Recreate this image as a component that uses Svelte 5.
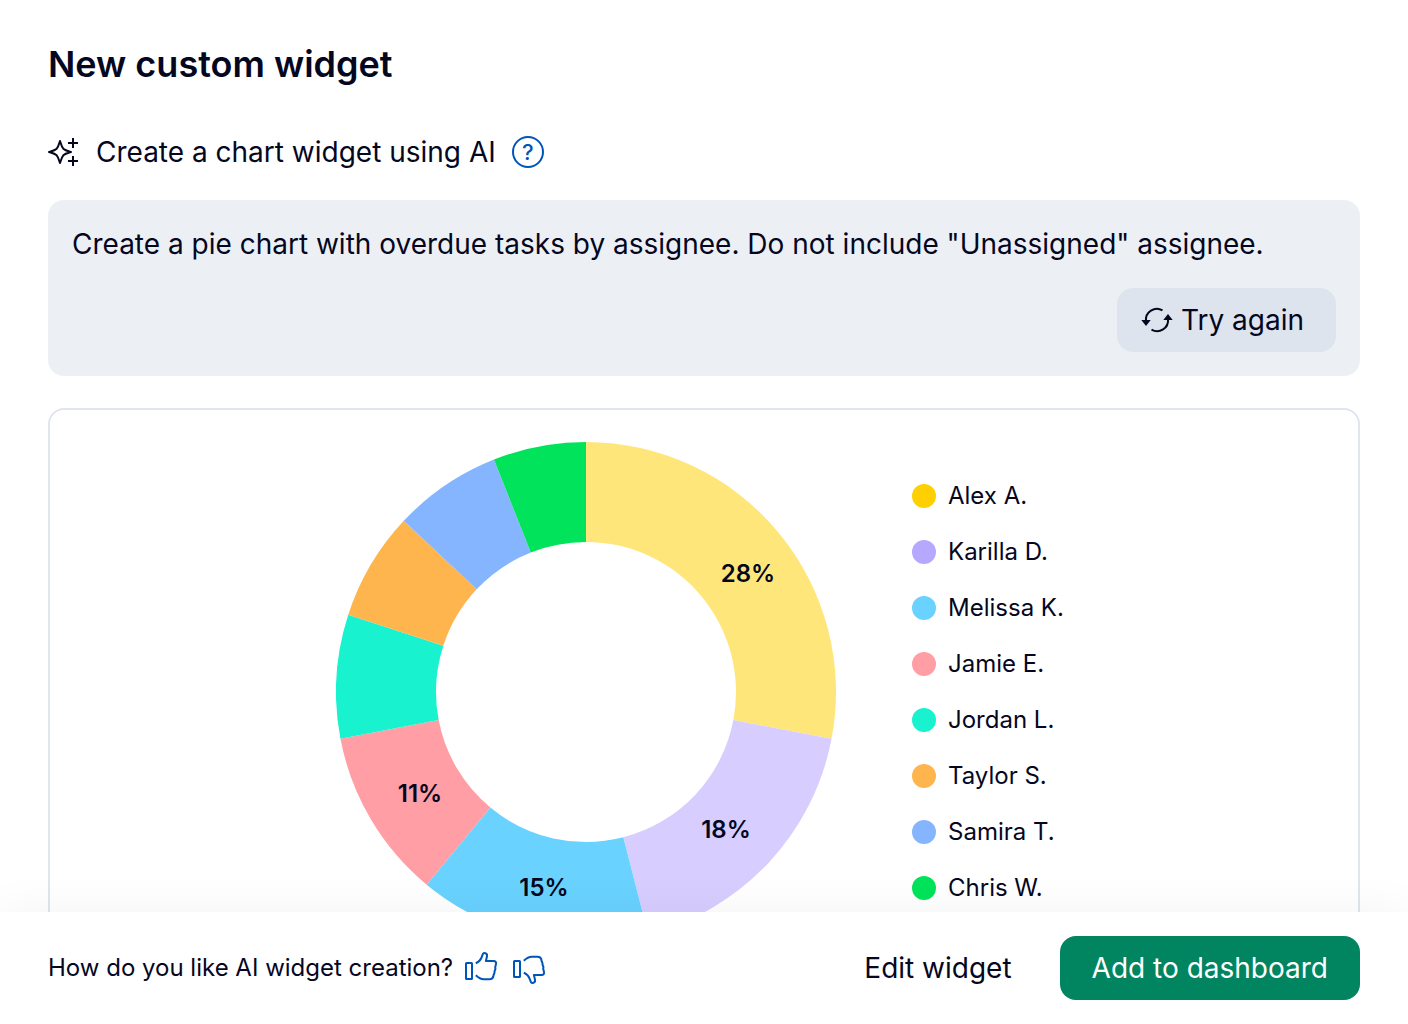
<script>
  const slices = [
    { name: 'Alex A.', value: 28, fill: '#ffe67a', dot: '#ffd000', x: 412, y: 131 },
    { name: 'Karilla D.', value: 18, fill: '#d7ceff', dot: '#b6a7ff', x: 390, y: 387 },
    { name: 'Melissa K.', value: 15, fill: '#69d2ff', dot: '#69d2ff', x: 208, y: 445 },
    { name: 'Jamie E.', value: 11, fill: '#ff9ea5', dot: '#ff9ea5', x: 84, y: 351 },
    { name: 'Jordan L.', value: 8, fill: '#19f2cf', dot: '#19f2cf' },
    { name: 'Taylor S.', value: 7, fill: '#ffb54d', dot: '#ffb54d' },
    { name: 'Samira T.', value: 7, fill: '#86b5ff', dot: '#86b5ff' },
    { name: 'Chris W.', value: 6, fill: '#00e35b', dot: '#00e35b' }
  ];

  let prompt = $state(
    'Create a pie chart with overdue tasks by assignee. Do not include "Unassigned" assignee.'
  );

  function point(percent, radius) {
    const angle = (percent / 100) * Math.PI * 2;
    return `${(250 + radius * Math.sin(angle)).toFixed(2)} ${(250 - radius * Math.cos(angle)).toFixed(2)}`;
  }

  function ring(start, end) {
    return `M${point(start, 250)}A250 250 0 0 1 ${point(end, 250)}L${point(end, 150)}A150 150 0 0 0 ${point(start, 150)}Z`;
  }

  let total = 0;
  const arcs = slices.map((s) => {
    const start = total;
    total += s.value;
    return { ...s, d: ring(start, total) };
  });
</script>

<div class="dialog">
  <main>
    <h1>New custom widget</h1>

    <div class="subtitle">
      <svg class="icon" viewBox="0 0 32 32" aria-hidden="true">
        <path d="M12 5C13 8.3 13.6 10.8 15.3 12.7C17.2 14.4 19.7 15 23 16C19.7 17 17.2 17.6 15.3 19.3C13.6 21.2 13 23.7 12 27C11 23.7 10.4 21.2 8.7 19.3C6.8 17.6 4.3 17 1 16C4.3 15 6.8 14.4 8.7 12.7C10.4 10.8 11 8.3 12 5Z" />
        <path d="M25 2V12M20 7H30M25 20V30M20 25H30" />
      </svg>
      <label for="prompt">Create a chart widget using AI</label>
      <button class="help" aria-label="Help">?</button>
    </div>

    <div class="prompt">
      <textarea id="prompt" rows="1" bind:value={prompt}></textarea>
      <button class="retry">
        <svg class="icon" viewBox="0 0 32 32" aria-hidden="true">
          <path d="M5 17A11 11 0 0 1 21.5 6.3M27 15A11 11 0 0 1 10.5 25.7" />
          <path class="solid" d="M0.3 16H9.7L5 22ZM22.3 16H31.7L27 10Z" />
        </svg>
        Try again
      </button>
    </div>

    <section class="card" aria-label="Overdue tasks by assignee">
      <svg class="donut" viewBox="0 0 500 500" role="img" aria-label="Overdue tasks by assignee">
        {#each arcs as arc}
          <path d={arc.d} fill={arc.fill} />
        {/each}
        {#each arcs as arc}
          {#if arc.x}
            <text x={arc.x} y={arc.y + 9}>{arc.value}%</text>
          {/if}
        {/each}
      </svg>
      <ul>
        {#each slices as s}
          <li>
            <svg class="dot" viewBox="0 0 24 24" aria-hidden="true"><circle cx="12" cy="12" r="12" fill={s.dot} /></svg>
            {s.name}
          </li>
        {/each}
      </ul>
    </section>
  </main>

  <footer>
    <div class="feedback">
      <span>How do you like AI widget creation?</span>
      <div class="votes">
        <button aria-label="Like">
          <svg class="icon" viewBox="0 0 32 32" aria-hidden="true">
            <rect x="1" y="11" width="6" height="16" rx="0.6" />
            <path d="M10.8 11.4C13.6 10 15.6 8.2 16.6 5.4L17.6 2.6C18.1 1.2 19.2 0.8 20.4 1.2C21.9 1.7 22.3 2.8 22 4.2L20.9 9H28.6C30.6 9 31.4 10.4 31 12L30.2 15.2L30.4 17.2L29.6 19.2L29.4 21.2L28.6 23L28.3 24.6C27.7 26.4 26.4 27.2 24.6 27.2H18.6C15.2 27.2 13.6 25.8 10.8 23.2" />
          </svg>
        </button>
        <button aria-label="Dislike">
          <svg class="icon" viewBox="0 0 32 32" aria-hidden="true">
            <rect x="1" y="9" width="6" height="16" rx="0.6" />
            <path d="M10.8 20.6C13.6 22 15.6 23.8 16.6 26.6L17.6 29.4C18.1 30.8 19.2 31.2 20.4 30.8C21.9 30.3 22.3 29.2 22 27.8L20.9 23H28.6C30.6 23 31.4 21.6 31 20L30.2 16.8L30.4 14.8L29.6 12.8L29.4 10.8L28.6 9L28.3 7.4C27.7 5.6 26.4 4.8 24.6 4.8H18.6C15.2 4.8 13.6 6.2 10.8 8.8" />
          </svg>
        </button>
      </div>
    </div>
    <div class="actions">
      <button class="edit">Edit widget</button>
      <button class="add">Add to dashboard</button>
    </div>
  </footer>
</div>

<style>
  :global(body) {
    background: #fff;
  }

  .dialog {
    display: flex;
    flex-direction: column;
    height: 100vh;
    color: #05071f;
    font-family: Inter, 'Liberation Sans', sans-serif;
    font-size: 28px;
    line-height: 40px;
    font-optical-sizing: none;
  }

  main {
    flex: 1;
    min-height: 0;
    overflow: hidden;
    padding: 40px 48px 0;
  }

  h1 {
    margin: 0 0 48px;
    font-size: 36px;
    font-weight: 600;
    line-height: 48px;
  }

  button {
    margin: 0;
    padding: 0;
    border: 0;
    background: none;
    color: inherit;
    font: inherit;
    cursor: pointer;
  }

  .icon {
    display: block;
    flex: none;
    width: 32px;
    height: 32px;
    fill: none;
    stroke: currentColor;
    stroke-width: 2;
    stroke-linejoin: round;
    overflow: visible;
  }

  .icon .solid {
    fill: currentColor;
    stroke: none;
  }

  .subtitle {
    display: flex;
    align-items: center;
    gap: 16px;
    margin-bottom: 32px;
    line-height: 32px;
  }

  .help {
    box-sizing: border-box;
    width: 32px;
    height: 32px;
    border: 2px solid #0055b8;
    border-radius: 50%;
    color: #0055b8;
    font-size: 22px;
    font-weight: 500;
    line-height: 28px;
  }

  .prompt {
    display: flex;
    flex-direction: column;
    gap: 24px;
    margin-bottom: 32px;
    padding: 24px;
    border-radius: 16px;
    background: #ecf0f5;
  }

  textarea {
    display: block;
    width: 100%;
    padding: 0;
    border: 0;
    outline: 0;
    resize: none;
    overflow: hidden;
    background: none;
    color: inherit;
    font: inherit;
    font-optical-sizing: none;
    field-sizing: content;
  }

  .retry {
    display: flex;
    align-items: center;
    align-self: flex-end;
    gap: 8px;
    height: 64px;
    padding: 0 32px 0 24px;
    border-radius: 16px;
    background: #dde4ed;
  }

  .card {
    display: flex;
    justify-content: center;
    align-items: center;
    gap: 76px;
    padding: 32px;
    border: 2px solid #e0e5ef;
    border-radius: 16px;
    font-size: 24px;
  }

  .donut {
    flex: none;
    width: 500px;
    height: 500px;
  }

  .donut text {
    fill: #05071f;
    font-weight: 600;
    text-anchor: middle;
  }

  ul {
    display: grid;
    gap: 24px;
    width: 160px;
    margin: 0;
    padding: 0;
    list-style: none;
    line-height: 32px;
  }

  li {
    display: flex;
    align-items: center;
    gap: 12px;
    white-space: nowrap;
  }

  .dot {
    flex: none;
    width: 24px;
    height: 24px;
  }

  footer {
    position: relative;
    display: flex;
    justify-content: space-between;
    align-items: center;
    padding: 24px 48px;
    background: #fff;
    box-shadow: 0 0 48px rgba(5, 30, 30, 0.05);
  }

  .feedback,
  .votes,
  .actions {
    display: flex;
    align-items: center;
  }

  .feedback {
    gap: 12px;
    font-size: 24px;
  }

  .votes {
    gap: 16px;
    color: #0055b8;
  }

  .actions {
    gap: 24px;
  }

  .edit,
  .add {
    height: 64px;
    padding: 0 24px;
    border-radius: 16px;
  }

  .add {
    padding: 0 32px;
    background: #008560;
    color: #fff;
  }
</style>
